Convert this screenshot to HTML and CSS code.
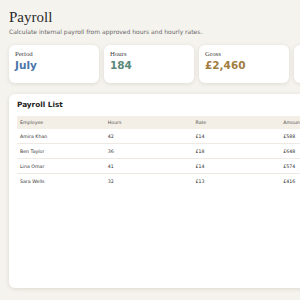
FILE: index.html
```html
<!DOCTYPE html>
<html>
<head>
<meta charset="utf-8">
<link rel="stylesheet" href="styles.css">
</head>
<body>
<div class="page">
  <h1 class="title">Payroll</h1>
  <p class="subtitle">Calculate internal payroll from approved hours and hourly rates.</p>
  <div class="cards">
    <div class="card"><div class="label">Period</div><div class="value blue">July</div></div>
    <div class="card"><div class="label">Hours</div><div class="value green">184</div></div>
    <div class="card"><div class="label">Gross</div><div class="value gold">£2,460</div></div>
    <div class="card"><div class="label">Staff</div><div class="value dark">4</div></div>
  </div>
  <div class="panel">
    <h2 class="panel-title">Payroll List</h2>
    <table class="table">
      <thead>
        <tr><th>Employee</th><th>Hours</th><th>Rate</th><th>Amount</th></tr>
      </thead>
      <tbody>
        <tr><td>Amira Khan</td><td>42</td><td>£14</td><td>£588</td></tr>
        <tr><td>Ben Taylor</td><td>36</td><td>£18</td><td>£648</td></tr>
        <tr><td>Lina Omar</td><td>41</td><td>£14</td><td>£574</td></tr>
        <tr><td>Sara Wells</td><td>32</td><td>£13</td><td>£416</td></tr>
      </tbody>
    </table>
  </div>
</div>
</body>
</html>
```
FILE: styles.css
```css
html, body {
  margin: 0;
  padding: 0;
  background: #f5f3ee;
  overflow: hidden;
}
.page {
  padding: 8px 9px;
  width: 375px;
  font-family: "DejaVu Sans", sans-serif;
  color: #2b2b2b;
}
.title {
  margin: 0;
  font-family: "Liberation Serif", serif;
  font-weight: normal;
  font-size: 15px;
  line-height: 18px;
  color: #2a2a2a;
}
.subtitle {
  margin: 2px 0 0;
  font-size: 6px;
  line-height: 8px;
  color: #666;
}
.cards {
  margin-top: 9px;
  display: grid;
  grid-template-columns: repeat(4, 90px);
  gap: 5px;
}
.card {
  background: #fff;
  border-radius: 6px;
  height: 38px;
  padding: 5px 6px 0;
  box-sizing: border-box;
  box-shadow: 0 1px 4px rgba(120, 110, 90, 0.18);
}
.label {
  font-family: "Liberation Serif", serif;
  font-size: 6.8px;
  line-height: 7px;
  color: #444;
}
.value {
  margin-top: 2px;
  font-weight: bold;
  font-size: 10.5px;
  line-height: 13px;
}
.blue { color: #4b74ab; }
.green { color: #5b8878; }
.gold { color: #a17c3f; }
.dark { color: #444; }
.panel {
  margin-top: 11px;
  background: #fff;
  border-radius: 6px;
  height: 194px;
  padding: 6px 8px 0;
  box-sizing: border-box;
  box-shadow: 0 1px 4px rgba(120, 110, 90, 0.2);
}
.panel-title {
  margin: 0;
  font-size: 7.3px;
  line-height: 10px;
  font-weight: bold;
  color: #222;
}
.table {
  margin-top: 6px;
  border-collapse: collapse;
  width: 351px;
  table-layout: fixed;
}
.table th {
  background: #f3eee6;
  font-weight: normal;
  font-size: 4.7px;
  color: #555;
  text-align: left;
  height: 13px;
  padding: 0 3px;
}
.table td {
  font-size: 4.7px;
  color: #333;
  height: 14px;
  padding: 0 3px;
  border-bottom: 1px solid #eeeae3;
}
.table tr:last-child td {
  border-bottom: none;
}
```
